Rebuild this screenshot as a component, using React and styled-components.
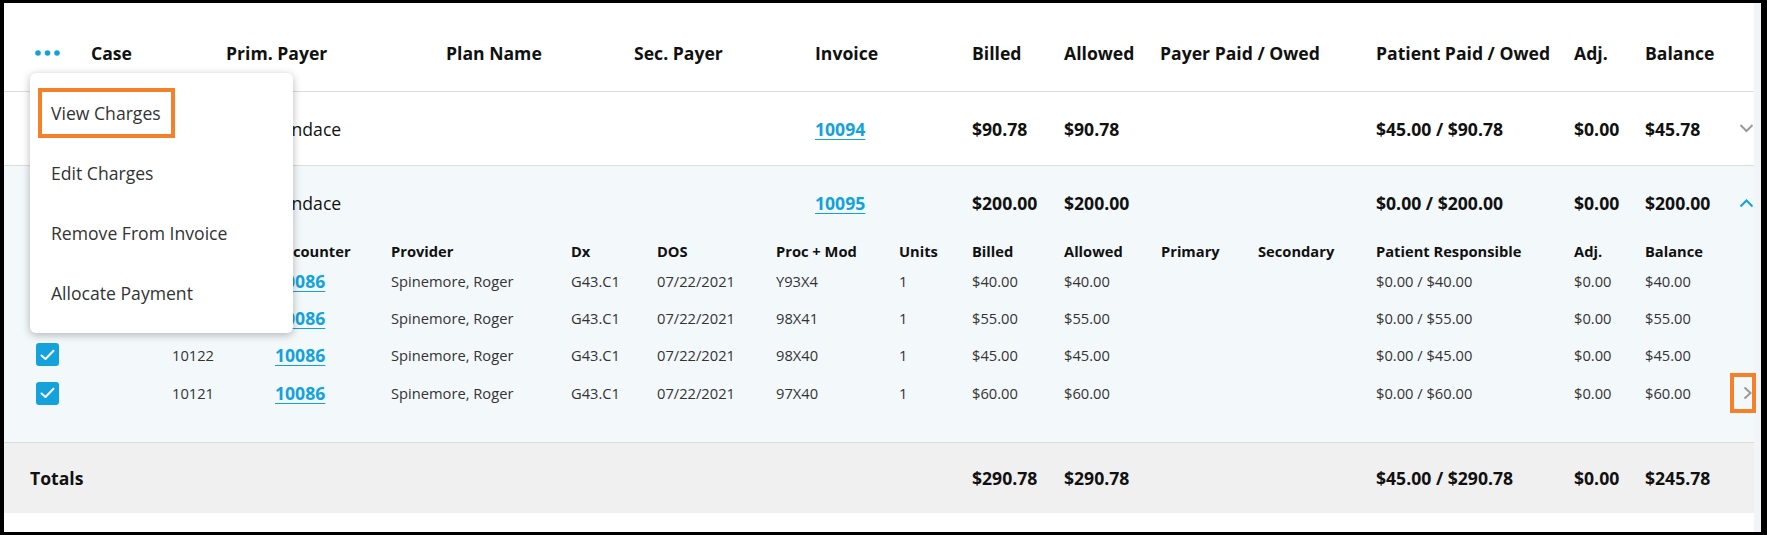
import React from 'react'
import styled, { createGlobalStyle } from 'styled-components'

const GlobalStyle = createGlobalStyle`
  html, body {
    margin: 0;
    padding: 0;
    background: #fff;
  }
  body {
    font-family: "Open Sans", "Liberation Sans", sans-serif;
    color: #111;
  }
`

const MAIN_COLS = '61px 135px 220px 188px 181px 157px 92px 96px 216px 198px 71px 94px 15px'
const SUB_COLS = '142px 103px 116px 180px 86px 119px 123px 73px 92px 97px 97px 118px 198px 71px 94px 15px'

const BLUE = '#14a2dc'
const ORANGE = '#f5802a'

const Frame = styled.div`
  box-sizing: border-box;
  width: 1767px;
  height: 535px;
  border: solid #000;
  border-width: 3px 6px 3px 4px;
  display: flex;
  overflow: hidden;
  background: #fff;
`

const Table = styled.div`
  position: relative;
  flex: 1;
  display: flex;
  flex-direction: column;
`

const Gutter = styled.div`
  width: 7px;
  background: #f2f5f7;
`

const MainGrid = styled.div`
  box-sizing: border-box;
  display: grid;
  grid-template-columns: ${MAIN_COLS};
  align-items: center;
  padding-left: 26px;
  height: ${p => p.$h}px;
  padding-top: ${p => p.$top || 0}px;
  background: ${p => p.$bg || 'transparent'};
  border-bottom: ${p => (p.$line ? '1px solid #dcdcdc' : 'none')};
`

const SubGrid = styled.div`
  display: grid;
  grid-template-columns: ${SUB_COLS};
  align-items: center;
  padding-left: 26px;
  height: ${p => p.$h}px;
`

const Expanded = styled.div`
  background: #f3f8fb;
  border-bottom: 1px solid #dcdcdc;
  padding-bottom: 32px;
`

const Head = styled.span`
  font-size: 17.6px;
  font-weight: 700;
  color: #111;
  white-space: nowrap;
`

const Value = styled.span`
  font-size: 17.6px;
  font-weight: ${p => (p.$plain ? 400 : 700)};
  color: #111;
  white-space: nowrap;
`

const SubHead = styled.span`
  font-size: 14.7px;
  font-weight: 700;
  color: #111;
  white-space: nowrap;
`

const SubText = styled.span`
  font-size: 14.7px;
  color: #333;
  white-space: nowrap;
`

const Link = styled.a`
  font-size: 17.6px;
  font-weight: 700;
  color: ${BLUE};
  text-decoration: underline;
  text-underline-offset: 3px;
  white-space: nowrap;
  cursor: pointer;
`

const IconCell = styled.span`
  display: flex;
  align-items: center;
  justify-content: flex-start;
`

const Highlight = styled.span`
  position: relative;
  z-index: 2;
  box-sizing: border-box;
  display: flex;
  align-items: center;
  width: 29px;
  height: 40px;
  margin-left: -9px;
  padding-left: 9px;
  border: 4px solid ${ORANGE};
`

const Check = styled.span`
  display: flex;
  align-items: center;
  justify-content: center;
  width: 23px;
  height: 23px;
  margin-left: 6px;
  border-radius: 3px;
  background: ${BLUE};
`

const Menu = styled.div`
  position: absolute;
  left: 26px;
  top: 70px;
  z-index: 5;
  box-sizing: border-box;
  width: 263px;
  height: 260px;
  padding: 10px 0;
  background: #fff;
  border-radius: 6px;
  box-shadow: 0 2px 8px rgba(0, 0, 0, 0.28);
`

const MenuItem = styled.div`
  display: flex;
  align-items: center;
  height: 60px;
  padding-left: 21px;
  font-size: 17.6px;
  color: #333;
  white-space: nowrap;
`

const MenuLabel = styled.span`
  ${p =>
    p.$active &&
    `
    box-sizing: border-box;
    display: flex;
    align-items: center;
    height: 50px;
    margin-left: -13px;
    padding: 0 10px 0 9px;
    border: 4px solid ${ORANGE};
  `}
`

const Dots = () => (
  <svg width="25" height="6" viewBox="0 0 25 6" style={{ marginLeft: 5 }}>
    <circle cx="3" cy="3" r="2.8" fill={BLUE} />
    <circle cx="12.5" cy="3" r="2.8" fill={BLUE} />
    <circle cx="22" cy="3" r="2.8" fill={BLUE} />
  </svg>
)

const CheckMark = () => (
  <svg width="15" height="12" viewBox="0 0 15 12">
    <polyline points="1.5,6.5 5.5,10 13.5,1.8" fill="none" stroke="#fff" strokeWidth="2" strokeLinecap="round" strokeLinejoin="round" />
  </svg>
)

const Chevron = ({ dir, color }) => {
  if (dir === 'right') {
    return (
      <svg width="9" height="14" viewBox="0 0 9 14">
        <polyline points="1.5,1.5 7.5,7 1.5,12.5" fill="none" stroke={color} strokeWidth="2" />
      </svg>
    )
  }
  const pts = dir === 'up' ? '1.5,7.5 7.5,1.5 13.5,7.5' : '1.5,1 7.5,7 13.5,1'
  return (
    <svg width="15" height="9" viewBox="0 0 15 9">
      <polyline points={pts} fill="none" stroke={color} strokeWidth="2" />
    </svg>
  )
}

const invoices = [
  { invoice: '10094', billed: '$90.78', allowed: '$90.78', patient: '$45.00 / $90.78', adj: '$0.00', balance: '$45.78' },
  { invoice: '10095', billed: '$200.00', allowed: '$200.00', patient: '$0.00 / $200.00', adj: '$0.00', balance: '$200.00', expanded: true },
]

// first two charges sit under the open menu, so their ids are not shown
const charges = [
  { key: 'a', proc: 'Y93X4', amount: '$40.00' },
  { key: 'b', proc: '98X41', amount: '$55.00' },
  { key: 'c', id: '10122', proc: '98X40', amount: '$45.00' },
  { key: 'd', id: '10121', proc: '97X40', amount: '$60.00', open: true },
]

const headers = ['Case', 'Prim. Payer', 'Plan Name', 'Sec. Payer', 'Invoice', 'Billed', 'Allowed', 'Payer Paid / Owed', 'Patient Paid / Owed', 'Adj.', 'Balance']
const subHeaders = ['Encounter', 'Provider', 'Dx', 'DOS', 'Proc + Mod', 'Units', 'Billed', 'Allowed', 'Primary', 'Secondary', 'Patient Responsible', 'Adj.', 'Balance']

const InvoiceRow = ({ row }) => (
  <MainGrid $h={74} $line={!row.expanded}>
    <span />
    <span />
    <Value $plain>Self - Candace</Value>
    <span />
    <span />
    <Link>{row.invoice}</Link>
    <Value>{row.billed}</Value>
    <Value>{row.allowed}</Value>
    <span />
    <Value>{row.patient}</Value>
    <Value>{row.adj}</Value>
    <Value>{row.balance}</Value>
    <IconCell>
      <Chevron dir={row.expanded ? 'up' : 'down'} color={row.expanded ? BLUE : '#999'} />
    </IconCell>
  </MainGrid>
)

const ChargeRow = ({ c }) => (
  <SubGrid $h={37}>
    <Check><CheckMark /></Check>
    <SubText>{c.id}</SubText>
    <Link>10086</Link>
    <SubText>Spinemore, Roger</SubText>
    <SubText>G43.C1</SubText>
    <SubText>07/22/2021</SubText>
    <SubText>{c.proc}</SubText>
    <SubText>1</SubText>
    <SubText>{c.amount}</SubText>
    <SubText>{c.amount}</SubText>
    <span />
    <span />
    <SubText>$0.00 / {c.amount}</SubText>
    <SubText>$0.00</SubText>
    <SubText>{c.amount}</SubText>
    <IconCell>
      {c.open && (
        <Highlight>
          <Chevron dir="right" color="#999" />
        </Highlight>
      )}
    </IconCell>
  </SubGrid>
)

export default function App() {
  const [first, second] = invoices
  return (
    <>
      <GlobalStyle />
      <Frame>
        <Table>
          <MainGrid $h={89} $top={12} $line>
            <Dots />
            {headers.map(h => (
              <Head key={h}>{h}</Head>
            ))}
            <span />
          </MainGrid>

          <InvoiceRow row={first} />

          <Expanded>
            <InvoiceRow row={second} />
            <SubGrid $h={22}>
              <span />
              <span />
              {subHeaders.map(h => (
                <SubHead key={h}>{h}</SubHead>
              ))}
              <span />
            </SubGrid>
            {charges.map(c => (
              <ChargeRow key={c.key} c={c} />
            ))}
          </Expanded>

          <MainGrid $h={70} $bg="#f0f0f0">
            <Head>Totals</Head>
            <span />
            <span />
            <span />
            <span />
            <span />
            <Value>$290.78</Value>
            <Value>$290.78</Value>
            <span />
            <Value>$45.00 / $290.78</Value>
            <Value>$0.00</Value>
            <Value>$245.78</Value>
            <span />
          </MainGrid>

          <Menu>
            <MenuItem><MenuLabel $active>View Charges</MenuLabel></MenuItem>
            <MenuItem><MenuLabel>Edit Charges</MenuLabel></MenuItem>
            <MenuItem><MenuLabel>Remove From Invoice</MenuLabel></MenuItem>
            <MenuItem><MenuLabel>Allocate Payment</MenuLabel></MenuItem>
          </Menu>
        </Table>
        <Gutter />
      </Frame>
    </>
  )
}
